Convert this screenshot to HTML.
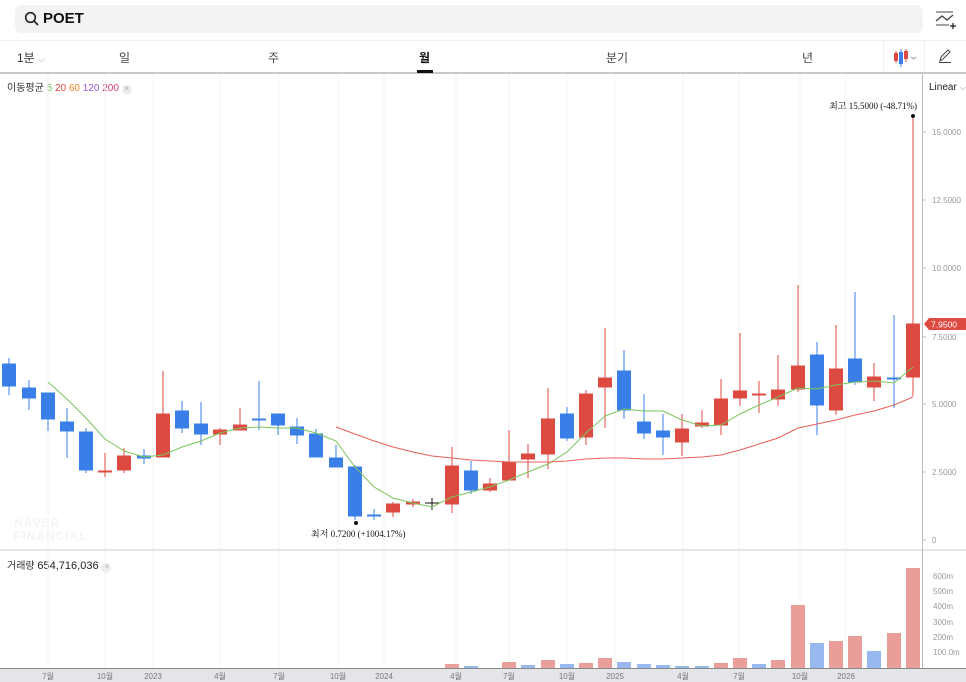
<!DOCTYPE html>
<html><head><meta charset="utf-8"><style>
*{margin:0;padding:0;box-sizing:border-box}
body{width:966px;height:682px;background:#fff;font-family:"Liberation Sans","Noto Sans CJK KR",sans-serif;overflow:hidden;position:relative}
.abs{position:absolute}
</style></head><body>
<div class="abs" style="left:15px;top:5px;width:908px;height:28px;background:#f2f3f5;border-radius:7px"></div>
<svg class="abs" style="left:24px;top:11px" width="16" height="16" viewBox="0 0 16 16"><circle cx="6.5" cy="6.5" r="4.8" fill="none" stroke="#222" stroke-width="1.6"/><line x1="10" y1="10" x2="14" y2="14" stroke="#222" stroke-width="1.6"/></svg>
<div class="abs" style="left:43px;top:10px;font-size:15px;font-weight:bold;color:#111">POET</div>
<svg class="abs" style="left:935px;top:10px" width="22" height="20" viewBox="0 0 22 20"><line x1="1" y1="2" x2="18" y2="2" stroke="#444" stroke-width="1"/><polyline points="1,11 7,6 12,10 18,5" fill="none" stroke="#444" stroke-width="1.3"/><line x1="1" y1="15" x2="14" y2="15" stroke="#444"/><line x1="15" y1="16" x2="21" y2="16" stroke="#222" stroke-width="1.3"/><line x1="18" y1="13" x2="18" y2="19" stroke="#222" stroke-width="1.3"/></svg>
<div class="abs" style="left:0;top:40px;width:966px;height:1px;background:#f0f0f0"></div>
<div class="abs" style="left:0;top:72px;width:966px;height:2px;background:#c9c9cc"></div>
<div class="abs" style="left:17px;top:49px;font-size:12px;color:#333">1분 <span style="font-size:9px;color:#999">⌵</span></div>
<div class="abs" style="left:119px;top:49px;font-size:12px;color:#444">일</div>
<div class="abs" style="left:268px;top:49px;font-size:12px;color:#444">주</div>
<div class="abs" style="left:419px;top:49px;font-size:12px;color:#111;font-weight:bold">월</div>
<div class="abs" style="left:417px;top:70px;width:16px;height:3px;background:#111"></div>
<div class="abs" style="left:606px;top:49px;font-size:12px;color:#444">분기</div>
<div class="abs" style="left:802px;top:49px;font-size:12px;color:#444">년</div>
<div class="abs" style="left:883px;top:40px;width:1px;height:32px;background:#f0f0f0"></div>
<div class="abs" style="left:924px;top:40px;width:1px;height:32px;background:#f0f0f0"></div>
<svg class="abs" style="left:892px;top:48px" width="28" height="20"><rect x="2" y="5" width="4" height="8" fill="#dc4a42"/><line x1="4" y1="3" x2="4" y2="15" stroke="#dc4a42"/><rect x="7" y="4" width="4" height="12" fill="#3a7fe8"/><line x1="9" y1="1" x2="9" y2="19" stroke="#3a7fe8"/><rect x="12" y="3" width="4" height="8" fill="#dc4a42"/><line x1="14" y1="1" x2="14" y2="14" stroke="#dc4a42"/><polyline points="19,9 21.5,11 24,9" fill="none" stroke="#999"/></svg>
<svg class="abs" style="left:937px;top:48px" width="16" height="16"><path d="M3 13 L4 9 L11 2 L13 4 L6 11 Z" fill="none" stroke="#444" stroke-width="1"/><line x1="2" y1="14.5" x2="14" y2="14.5" stroke="#444"/></svg>

<div class="abs" style="left:7px;top:79px;font-size:10px;color:#333">이동평균 <span style="color:#6cbf3c">5</span> <span style="color:#e8453c">20</span> <span style="color:#f08a24">60</span> <span style="color:#9b59d0">120</span> <span style="color:#d83b6a">200</span> <span style="display:inline-block;width:10px;height:10px;border-radius:5px;background:#eee;color:#aaa;font-size:7px;text-align:center;line-height:10px">✕</span></div>
<div class="abs" style="left:929px;top:82px;font-size:10px;color:#222">Linear <span style="color:#999;font-size:8px">⌵</span></div>
<div class="abs" style="left:7px;top:557px;font-size:10px;color:#333">거래량 <span style="font-size:11px;color:#222">654,716,036</span> <span style="display:inline-block;width:10px;height:10px;border-radius:5px;background:#eee;color:#aaa;font-size:7px;text-align:center;line-height:10px">✕</span></div>
<div class="abs" style="left:14px;top:517px;font-size:12px;font-weight:bold;color:#f3f4f6;line-height:13px;letter-spacing:1px">NAVER<br>FINANCIAL</div>

<svg class="abs" style="left:0;top:0" width="966" height="682">
<g stroke="#f3f3f5" stroke-width="1">
<line x1="48" y1="74" x2="48" y2="668"/><line x1="105" y1="74" x2="105" y2="668"/><line x1="153" y1="74" x2="153" y2="668"/><line x1="220" y1="74" x2="220" y2="668"/><line x1="279" y1="74" x2="279" y2="668"/><line x1="338" y1="74" x2="338" y2="668"/><line x1="384" y1="74" x2="384" y2="668"/><line x1="456" y1="74" x2="456" y2="668"/><line x1="509" y1="74" x2="509" y2="668"/><line x1="567" y1="74" x2="567" y2="668"/><line x1="615" y1="74" x2="615" y2="668"/><line x1="683" y1="74" x2="683" y2="668"/><line x1="739" y1="74" x2="739" y2="668"/><line x1="800" y1="74" x2="800" y2="668"/><line x1="846" y1="74" x2="846" y2="668"/>
</g>
<rect x="0" y="549" width="966" height="2" fill="#e6e6ea"/>
<line x1="922.5" y1="74" x2="922.5" y2="668" stroke="#bbb"/>
<g font-size="8" fill="#999" font-family="Liberation Sans">
<text x="932" y="135">15.0000</text><text x="932" y="203">12.5000</text><text x="932" y="271">10.0000</text><text x="932" y="340">7.5000</text><text x="932" y="407">5.0000</text><text x="932" y="475">2.5000</text><text x="932" y="543">0</text>
<text x="933" y="579">600m</text><text x="933" y="594">500m</text><text x="933" y="609">400m</text><text x="933" y="625">300m</text><text x="933" y="640">200m</text><text x="933" y="655">100.0m</text>
</g>
<g stroke="#bbb"><line x1="922" y1="132" x2="926" y2="132"/><line x1="922" y1="200" x2="926" y2="200"/><line x1="922" y1="268" x2="926" y2="268"/><line x1="922" y1="337" x2="926" y2="337"/><line x1="922" y1="404" x2="926" y2="404"/><line x1="922" y1="472" x2="926" y2="472"/><line x1="922" y1="540" x2="926" y2="540"/></g>
<path d="M924 324 L929 318 L966 318 L966 330 L929 330 Z" fill="#dc4a42"/>
<text x="931" y="327.5" font-size="8.5" fill="#fff" font-family="Liberation Sans">7.9500</text>

<g fill="#3a7fe8" stroke="#3a7fe8">
<line x1="9" y1="358" x2="9" y2="395"/><rect x="2.5" y="364" width="13" height="22"/>
<line x1="29" y1="380" x2="29" y2="410"/><rect x="22.5" y="388" width="13" height="10"/>
<line x1="48" y1="393" x2="48" y2="431"/><rect x="41.5" y="393" width="13" height="26"/>
<line x1="67" y1="408" x2="67" y2="458"/><rect x="60.5" y="422" width="13" height="9"/>
<line x1="86" y1="428" x2="86" y2="473"/><rect x="79.5" y="432" width="13" height="38"/>
<line x1="144" y1="449" x2="144" y2="464"/><rect x="137.5" y="456" width="13" height="2"/>
<line x1="182" y1="401" x2="182" y2="433"/><rect x="175.5" y="411" width="13" height="17"/>
<line x1="201" y1="402" x2="201" y2="445"/><rect x="194.5" y="424" width="13" height="10"/>
<line x1="259" y1="381" x2="259" y2="430"/><rect x="252.5" y="419" width="13" height="1"/>
<line x1="278" y1="414" x2="278" y2="435"/><rect x="271.5" y="414" width="13" height="11"/>
<line x1="297" y1="418" x2="297" y2="444"/><rect x="290.5" y="427" width="13" height="8"/>
<line x1="316" y1="429" x2="316" y2="457"/><rect x="309.5" y="434" width="13" height="23"/>
<line x1="336" y1="445" x2="336" y2="467"/><rect x="329.5" y="458" width="13" height="9"/>
<line x1="355" y1="465" x2="355" y2="520"/><rect x="348.5" y="467" width="13" height="49"/>
<line x1="374" y1="509" x2="374" y2="520"/><rect x="367.5" y="515" width="13" height="1"/>
<line x1="471" y1="461" x2="471" y2="494"/><rect x="464.5" y="471" width="13" height="19"/>
<line x1="567" y1="407" x2="567" y2="441"/><rect x="560.5" y="414" width="13" height="24"/>
<line x1="624" y1="350" x2="624" y2="419"/><rect x="617.5" y="371" width="13" height="39"/>
<line x1="644" y1="394" x2="644" y2="439"/><rect x="637.5" y="422" width="13" height="11"/>
<line x1="663" y1="414" x2="663" y2="455"/><rect x="656.5" y="431" width="13" height="6"/>
<line x1="817" y1="342" x2="817" y2="435"/><rect x="810.5" y="355" width="13" height="50"/>
<line x1="855" y1="292" x2="855" y2="385"/><rect x="848.5" y="359" width="13" height="23"/>
<line x1="894" y1="315" x2="894" y2="408"/><rect x="887.5" y="378" width="13" height="1"/>
</g>
<g fill="#dc4a42" stroke="#dc4a42">
<line x1="105" y1="453" x2="105" y2="477"/><rect x="98.5" y="471" width="13" height="1"/>
<line x1="124" y1="448" x2="124" y2="473"/><rect x="117.5" y="456" width="13" height="14"/>
<line x1="163" y1="371" x2="163" y2="457"/><rect x="156.5" y="414" width="13" height="43"/>
<line x1="220" y1="428" x2="220" y2="445"/><rect x="213.5" y="430" width="13" height="4"/>
<line x1="240" y1="408" x2="240" y2="430"/><rect x="233.5" y="425" width="13" height="5"/>
<line x1="393" y1="502" x2="393" y2="517"/><rect x="386.5" y="504" width="13" height="8"/>
<line x1="413" y1="499" x2="413" y2="507"/><rect x="406.5" y="502" width="13" height="2"/>
<line x1="452" y1="447" x2="452" y2="513"/><rect x="445.5" y="466" width="13" height="38"/>
<line x1="490" y1="478" x2="490" y2="492"/><rect x="483.5" y="484" width="13" height="6"/>
<line x1="509" y1="430" x2="509" y2="480"/><rect x="502.5" y="462" width="13" height="18"/>
<line x1="528" y1="444" x2="528" y2="478"/><rect x="521.5" y="454" width="13" height="5"/>
<line x1="548" y1="388" x2="548" y2="469"/><rect x="541.5" y="419" width="13" height="35"/>
<line x1="586" y1="390" x2="586" y2="445"/><rect x="579.5" y="394" width="13" height="43"/>
<line x1="605" y1="328" x2="605" y2="428"/><rect x="598.5" y="378" width="13" height="9"/>
<line x1="682" y1="414" x2="682" y2="456"/><rect x="675.5" y="429" width="13" height="13"/>
<line x1="702" y1="410" x2="702" y2="428"/><rect x="695.5" y="423" width="13" height="3"/>
<line x1="721" y1="379" x2="721" y2="435"/><rect x="714.5" y="399" width="13" height="26"/>
<line x1="740" y1="333" x2="740" y2="406"/><rect x="733.5" y="391" width="13" height="7"/>
<line x1="759" y1="381" x2="759" y2="413"/><rect x="752.5" y="394" width="13" height="1"/>
<line x1="778" y1="355" x2="778" y2="406"/><rect x="771.5" y="390" width="13" height="9"/>
<line x1="798" y1="285" x2="798" y2="392"/><rect x="791.5" y="366" width="13" height="23"/>
<line x1="836" y1="325" x2="836" y2="415"/><rect x="829.5" y="369" width="13" height="41"/>
<line x1="874" y1="363" x2="874" y2="401"/><rect x="867.5" y="377" width="13" height="10"/>
<line x1="913" y1="116" x2="913" y2="396"/><rect x="906.5" y="324" width="13" height="53"/>
</g>
<g stroke="#111"><line x1="432" y1="498" x2="432" y2="510"/><line x1="425" y1="503" x2="439" y2="503"/></g>
<polyline fill="none" stroke="#7cc55a" stroke-width="1" points="48,382 67,399 86,418 105,439 124,451 144,457 163,455 182,447 201,441 220,433 240,428 259,427 278,428 297,428 316,433 336,441 355,467 374,487 393,498 413,503 432,507 452,497 471,492 490,487 509,480 528,472 548,464 567,452 586,433 605,416 624,409 644,411 663,411 682,420 702,426 721,425 740,414 759,405 778,397 798,388 817,389 836,385 855,382 874,381 894,383 913,367"/>
<polyline fill="none" stroke="#e8605a" stroke-width="1" points="336,427 355,434 374,441 393,447 413,452 432,456 452,458 471,460 490,461 509,462 528,462 548,462 567,461 586,459 605,458 624,458 644,459 663,459 682,458 702,457 721,455 740,450 759,444 778,438 798,428 817,424 836,420 855,415 874,411 894,405 913,397"/>
<circle cx="913" cy="116" r="2" fill="#111"/>
<circle cx="356" cy="523" r="2" fill="#111"/>
<text x="917" y="109" text-anchor="end" font-size="9" fill="#111" font-family="Liberation Serif,Noto Serif CJK SC,serif">최고  15.5000 (-48.71%)</text>
<text x="311" y="537" font-size="9" fill="#111" font-family="Liberation Serif,Noto Serif CJK SC,serif">최저  0.7200 (+1004.17%)</text>

<g fill="#e99e9a">
<rect x="445" y="664" width="14" height="4"/><rect x="502" y="662" width="14" height="6"/><rect x="541" y="660" width="14" height="8"/><rect x="579" y="663" width="14" height="5"/><rect x="598" y="658" width="14" height="10"/><rect x="714" y="663" width="14" height="5"/><rect x="733" y="658" width="14" height="10"/><rect x="771" y="660" width="14" height="8"/><rect x="791" y="605" width="14" height="63"/><rect x="829" y="641" width="14" height="27"/><rect x="848" y="636" width="14" height="32"/><rect x="887" y="633" width="14" height="35"/><rect x="906" y="568" width="14" height="100"/>
</g>
<g fill="#98b8f0">
<rect x="464" y="666" width="14" height="2"/><rect x="521" y="665" width="14" height="3"/><rect x="560" y="664" width="14" height="4"/><rect x="617" y="662" width="14" height="6"/><rect x="637" y="664" width="14" height="4"/><rect x="656" y="665" width="14" height="3"/><rect x="675" y="666" width="14" height="2"/><rect x="695" y="666" width="14" height="2"/><rect x="752" y="664" width="14" height="4"/><rect x="810" y="643" width="14" height="25"/><rect x="867" y="651" width="14" height="17"/>
</g>
<rect x="0" y="668" width="966" height="14" fill="#e3e5e9"/>
<line x1="0" y1="668.5" x2="966" y2="668.5" stroke="#888"/>
<g font-size="8" fill="#777" text-anchor="middle" font-family="Liberation Sans,Noto Sans CJK KR,sans-serif">
<text x="48" y="679">7월</text><text x="105" y="679">10월</text><text x="153" y="679">2023</text><text x="220" y="679">4월</text><text x="279" y="679">7월</text><text x="338" y="679">10월</text><text x="384" y="679">2024</text><text x="456" y="679">4월</text><text x="509" y="679">7월</text><text x="567" y="679">10월</text><text x="615" y="679">2025</text><text x="683" y="679">4월</text><text x="739" y="679">7월</text><text x="800" y="679">10월</text><text x="846" y="679">2026</text>
</g>
</svg>
</body></html>
